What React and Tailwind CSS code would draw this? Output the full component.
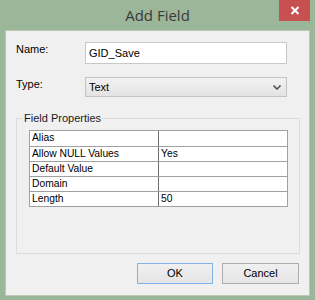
import React from 'react';

const rows = [
  { name: 'Alias', value: '' },
  { name: 'Allow NULL Values', value: 'Yes' },
  { name: 'Default Value', value: '' },
  { name: 'Domain', value: '' },
  { name: 'Length', value: '50' },
];

const App = () => {
  return (
    <div className="w-[315px] h-[300px] bg-[#9bb698] flex flex-col font-['Liberation_Sans',Arial,sans-serif] text-black overflow-hidden">
      {/* title bar */}
      <div className="relative h-[30px] flex items-center justify-center">
        <span className="font-['Open_Sans',sans-serif] text-[15px] text-[#3a3a3a] pt-[1px]">Add Field</span>
        <button className="absolute right-[5px] top-0 w-[31px] h-[21px] bg-[#c75050] flex items-center justify-center">
          <svg width="10" height="9" viewBox="0 0 10 9">
            <path d="M1.5 1 L8.5 8 M8.5 1 L1.5 8" stroke="#fff" strokeWidth="2" />
          </svg>
        </button>
      </div>

      {/* client area */}
      <div className="ml-[5px] w-[305px] h-[266px] bg-[#f0f0f0] border border-[#b9c9b6] flex flex-col text-[11px]">
        <div className="flex items-center mt-[11px] pl-[10px]">
          <span className="w-[69px] -mt-[8px]">Name:</span>
          <div className="w-[202px] h-[22px] bg-white border border-[#c8c8c8] flex items-center pl-[3px]">GID_Save</div>
        </div>

        <div className="flex items-center mt-[13px] pl-[10px]">
          <span className="w-[69px] -mt-[6px]">Type:</span>
          <div className="w-[202px] h-[20px] bg-gradient-to-b from-[#f2f2f2] to-[#e3e3e3] border border-[#c3c3c3] flex items-center justify-between pl-[3px] pr-[5px]">
            <span>Text</span>
            <svg width="8" height="5" viewBox="0 0 8 5">
              <path d="M0.5 0.5 L4 4 L7.5 0.5" stroke="#555" strokeWidth="1.6" fill="none" />
            </svg>
          </div>
        </div>

        <fieldset className="ml-[10px] mt-[13px] w-[284px] h-[144px] border border-[#dcdcdc] pl-[12px] pr-[11px]">
          <legend className="-ml-[6px] px-[1px] text-[#1a1a1a]">Field Properties</legend>
          <div className="mt-[3px] border border-[#a0a0a0] bg-white text-[10.3px]">
            {rows.map((r, i) => (
              <div key={r.name} className={`flex h-[15px] ${i > 0 ? 'border-t border-[#a0a0a0]' : ''}`}>
                <div className="w-[129px] border-r border-[#6d6d6d] pl-[2px] leading-[14px]">{r.name}</div>
                <div className="flex-1 pl-[2px] leading-[14px]">{r.value}</div>
              </div>
            ))}
          </div>
        </fieldset>

        <div className="flex justify-end gap-[9px] mt-[9px] pr-[10px]">
          <button className="w-[76px] h-[21px] border border-[#7eb4ea] bg-gradient-to-b from-[#f0f0f0] to-[#e5e5e5] text-[11px]">OK</button>
          <button className="w-[77px] h-[21px] border border-[#adadad] bg-gradient-to-b from-[#f0f0f0] to-[#e5e5e5] text-[11px]">Cancel</button>
        </div>
      </div>
    </div>
  );
};

export default App;
